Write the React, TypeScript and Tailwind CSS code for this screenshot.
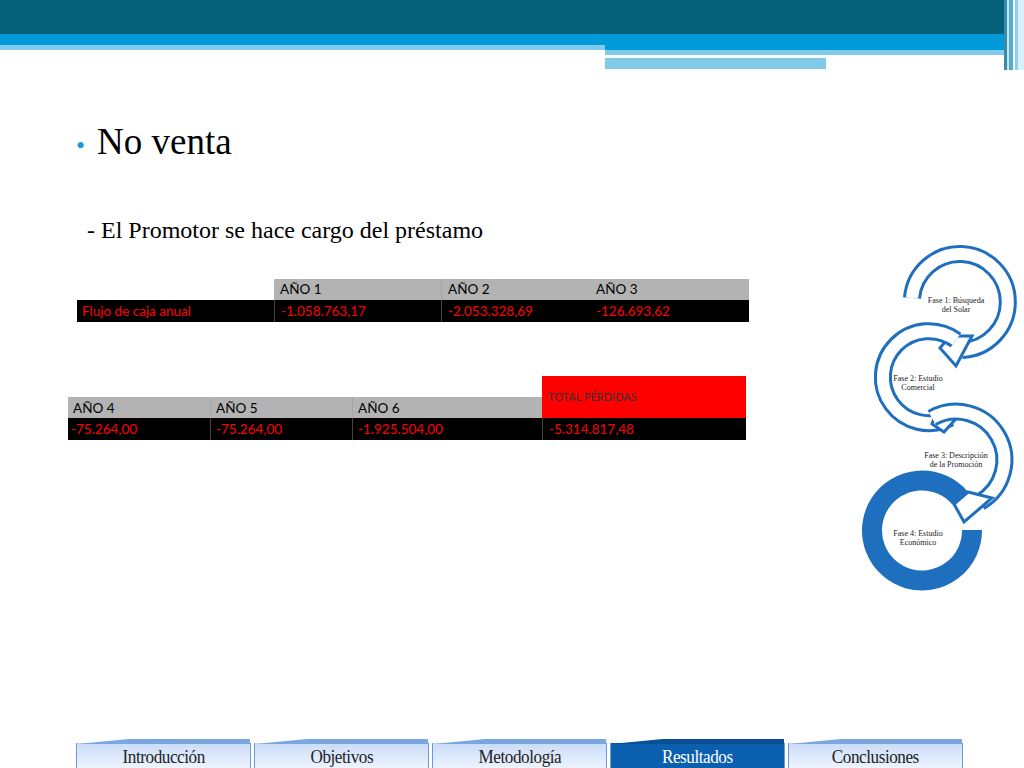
export default function App() {
  const serif = { fontFamily: '"Liberation Serif", "DejaVu Serif", serif' };
  const cal = { fontFamily: 'Lato, "Open Sans", sans-serif' };
  const tabs = ["Introducción", "Objetivos", "Metodología", "Resultados", "Conclusiones"];
  const arc = (d: string, key: string) => (
    <g key={key}>
      <path d={d} fill="none" stroke="#1f6fbf" strokeWidth="18" strokeLinejoin="round" />
      <path d={d} fill="none" stroke="#ffffff" strokeWidth="12" strokeLinejoin="round" />
    </g>
  );
  return (
    <div className="relative w-[1024px] h-[768px] bg-white overflow-hidden" style={cal}>
      {/* header */}
      <div className="flex flex-col">
        <div className="h-[34px] bg-[#05607a]" />
        <div className="h-[11px] bg-[#009ad8]" />
        <div className="flex">
          <div className="w-[605px] flex flex-col">
            <div className="h-[5px] bg-[#7fcbe9]" />
          </div>
          <div className="flex-1 flex flex-col">
            <div className="h-[5px] bg-[#009ad8]" />
            <div className="h-[5px] bg-[#7fcbe9]" />
            <div className="h-[3px] bg-white w-[343px]" />
            <div className="h-[11px] bg-[#7fcbe9] w-[221px]" />
          </div>
        </div>
      </div>
      <div className="absolute right-0 top-0 h-[70px] w-[20px] flex">
        <div className="w-[3px] bg-[#3b8aa8]" /><div className="w-[2px] bg-[#bfe6f5]" /><div className="w-[4px] bg-[#5aa9c8]" /><div className="w-[2px] bg-white" /><div className="w-[3px] bg-[#8fd0ec]" /><div className="w-[6px] bg-[#d8f0fa]" />
      </div>

      <div className="absolute left-[76px] top-[114px] text-[37px] text-black" style={serif}>
        <span className="text-[#1d9ad6] text-[26px] align-middle mr-3">•</span>No venta
      </div>
      <div className="absolute left-[87px] top-[212px] text-[24px] text-black" style={serif}>
        - El Promotor se hace cargo del préstamo
      </div>

      {/* table 1 */}
      <div className="absolute left-[77px] top-[279px] text-[13.5px]">
        <div className="flex h-[21px]">
          <div className="w-[197px]" />
          <div className="w-[167px] bg-[#b3b3b3] pl-[6px] leading-[21px]">AÑO 1</div>
          <div className="w-[149px] bg-[#b3b3b3] pl-[6px] leading-[21px] border-l border-[#a5a5a5]">AÑO 2</div>
          <div className="w-[159px] bg-[#b3b3b3] pl-[6px] leading-[21px]">AÑO 3</div>
        </div>
        <div className="flex h-[22px] bg-black text-[#ff0000] leading-[22px]">
          <div className="w-[197px] pl-[5px]">Flujo de caja anual</div>
          <div className="w-[167px] pl-[6px] border-l border-[#444]">-1.058.763,17</div>
          <div className="w-[149px] pl-[6px] border-l border-[#444]">-2.053.328,69</div>
          <div className="w-[159px] pl-[6px]">-126.693,62</div>
        </div>
      </div>

      {/* table 2 */}
      <div className="absolute left-[68px] top-[376px] text-[13.5px]">
        <div className="flex h-[42px] items-end">
          <div className="w-[142px] h-[21px] bg-[#b3b3b3] pl-[5px] leading-[23px]">AÑO 4</div>
          <div className="w-[142px] h-[21px] bg-[#b3b3b3] pl-[5px] leading-[23px] border-l border-[#a5a5a5]">AÑO 5</div>
          <div className="w-[190px] h-[21px] bg-[#b3b3b3] pl-[5px] leading-[23px] border-l border-[#a5a5a5]">AÑO 6</div>
          <div className="w-[204px] h-[42px] bg-[#ff0000] pl-[6px] pt-[13px] text-[11px] text-[#333]">TOTAL PÉRDIDAS</div>
        </div>
        <div className="flex h-[22px] bg-black text-[#ff0000] leading-[22px]">
          <div className="w-[142px] pl-[3px]">-75.264,00</div>
          <div className="w-[142px] pl-[5px] border-l border-[#444]">-75.264,00</div>
          <div className="w-[190px] pl-[5px] border-l border-[#444]">-1.925.504,00</div>
          <div className="w-[204px] pl-[6px] border-l border-[#444]">-5.314.817,48</div>
        </div>
      </div>

      {/* diagram */}
      <svg className="absolute left-[850px] top-[240px]" width="174" height="370" viewBox="0 0 174 370">
        {arc("M62 58 A48 48 0 1 1 112 110", "a1")}
        <path d="M100 96 L122 96 L106 126 L90 108 Z" fill="#fff" stroke="#1f6fbf" strokeWidth="3" />
        {arc("M106 100 A46 46 0 1 0 100 178", "a2")}
        <path d="M88 168 L112 172 L94 192 L82 184 Z" fill="#fff" stroke="#1f6fbf" strokeWidth="3" />
        {arc("M82 178 A48 48 0 1 1 130 262", "a3")}
        <path d="M118 252 L142 258 L114 282 L104 264 Z" fill="#fff" stroke="#1f6fbf" strokeWidth="3" />
        <path d="M110 258 A50 50 0 1 0 122 290" fill="none" stroke="#1f6fbf" strokeWidth="20" />
        <g fontFamily='"Liberation Serif", serif' fontSize="8" fill="#222" textAnchor="middle">
          <text x="106" y="63">Fase 1: Búsqueda</text>
          <text x="106" y="72">del  Solar</text>
          <text x="68" y="141">Fase 2: Estudio</text>
          <text x="68" y="150">Comercial</text>
          <text x="106" y="218">Fase 3: Descripción</text>
          <text x="106" y="227">de la      Promoción</text>
          <text x="68" y="296">Fase 4: Estudio</text>
          <text x="68" y="305">Económico</text>
        </g>
      </svg>

      {/* tabs */}
      <div className="absolute left-[76px] top-[743px] flex gap-[3px]">
        {tabs.map((t, i) => (
          <div key={t} className={`relative w-[175px] h-[25px] flex items-end justify-center ${i === 3 ? "bg-[#0a5fae] text-white" : "bg-gradient-to-b from-[#c9dcf8] to-[#eef4ff] text-[#222]"} border-x border-[#6a9bd8]`}>
            <div className={`absolute -top-[4px] left-0 right-0 h-[5px] ${i === 3 ? "bg-[#0a4f96]" : "bg-[#7aa7e0]"}`} style={{ clipPath: "polygon(0 100%, 30% 0, 100% 0, 100% 100%)" }} />
            <span className="text-[19px] leading-[22px] tracking-tight" style={{ ...serif, transform: "scaleX(0.9)" }}>{t}</span>
          </div>
        ))}
      </div>
    </div>
  );
}
